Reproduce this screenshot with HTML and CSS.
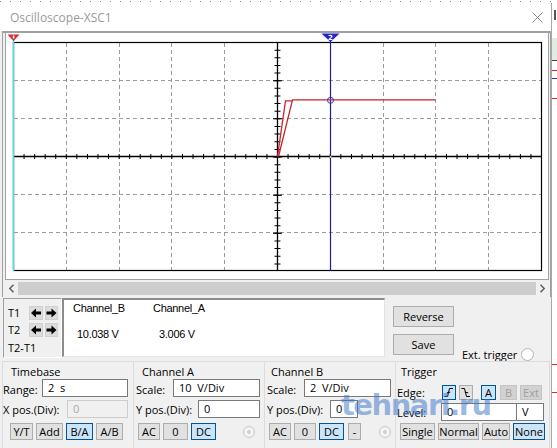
FILE: index.html
```html
<!DOCTYPE html>
<html>
<head>
<meta charset="utf-8">
<link rel="stylesheet" href="styles.css">
</head>
<body>
<div class="topdots"></div>
<div class="desk">
  <div class="win">
    <div class="titlebar">
      <span class="title">Oscilloscope-XSC1</span>
      <svg class="close" width="11" height="11" viewBox="0 0 11 11"><path d="M0.5 0.5 L10.5 10.5 M10.5 0.5 L0.5 10.5" stroke="#8a8a8a" stroke-width="1" fill="none"/></svg>
    </div>
    <div class="body">
      <div class="frame">
        <div class="screen">
          <svg class="plot" width="542" height="246" viewBox="6 33 542 246">
            <g stroke="#9a9a9a" stroke-width="1" stroke-dasharray="4 3" fill="none">
              <path d="M66.5 43 V270 M119.5 43 V270 M171.5 43 V270 M224.5 43 V270 M383.5 43 V270 M435.5 43 V270 M488.5 43 V270"/>
              <path d="M14 80.5 H541 M14 118.5 H541 M14 194.5 H541 M14 232.5 H541"/>
            </g>
            <rect x="13.5" y="42.5" width="528" height="228" fill="none" stroke="#000" stroke-width="1.2"/>
            <path d="M13.5 156.5 H541.5" stroke="#000" stroke-width="1.3"/>
            <path d="M277.5 42.5 V270.5" stroke="#000" stroke-width="1.3"/>
            <path d="M13 156.5 H541.5" stroke="#000" stroke-width="5" stroke-dasharray="1 9.56"/>
            <path d="M277.5 42 V271" stroke="#000" stroke-width="6" stroke-dasharray="1 6.634"/>
            <path d="M277.5 42 V271" stroke="#000" stroke-width="9" stroke-dasharray="1 37.17"/>
            <path d="M13.5 36 V271" stroke="#55dbe8" stroke-width="1.6"/>
            <polygon points="7.5,34.5 19.5,34.5 13.5,41" fill="#d42a32"/>
            <rect x="12.8" y="35.5" width="1.6" height="3" fill="#fff"/>
            <path d="M330.5 36 V271" stroke="#1e1e9a" stroke-width="1.2"/>
            <polygon points="321.5,33.5 339.5,33.5 330.5,42" fill="#2426c8"/>
            <text x="330.5" y="39.6" font-family="DejaVu Sans, sans-serif" font-size="7" font-weight="bold" fill="#fff" text-anchor="middle">2</text>
            <g fill="none" stroke="#c3262e" stroke-width="1.3">
              <polyline points="277.5,156.5 285.5,100.8 292,100.8"/>
              <polyline points="278.5,156.5 292.5,99.8 435.5,99.8"/>
            </g>
            <circle cx="330.5" cy="100.3" r="3" fill="none" stroke="#3434b0" stroke-width="1"/>
            <rect x="329.8" y="156" width="1.6" height="2" fill="#e8d84a"/>
          </svg>
        </div>
        <div class="hscroll">
          <div class="sarr"><svg width="7" height="9" viewBox="0 0 7 9"><path d="M5.5 0.8 L1.8 4.5 L5.5 8.2" stroke="#606060" stroke-width="1.5" fill="none"/></svg></div>
          <div class="strack"></div>
          <div class="sarr"><svg width="7" height="9" viewBox="0 0 7 9"><path d="M1.5 0.8 L5.2 4.5 L1.5 8.2" stroke="#606060" stroke-width="1.5" fill="none"/></svg></div>
        </div>
      </div>

      <div class="row1">
        <div class="tbox">
          <div class="trow">
            <span class="tlabel">T1</span>
            <span class="abtn"><svg width="14" height="14" viewBox="0 0 14 14"><polygon points="2,7 7,2.5 7,5.5 12,5.5 12,8.5 7,8.5 7,11.5" fill="#000"/></svg></span>
            <span class="abtn abtn2"><svg width="13" height="14" viewBox="0 0 13 14"><polygon points="11.5,7 6.5,2.5 6.5,5.5 1.5,5.5 1.5,8.5 6.5,8.5 6.5,11.5" fill="#000"/></svg></span>
          </div>
          <div class="trow trow2">
            <span class="tlabel">T2</span>
            <span class="abtn"><svg width="14" height="14" viewBox="0 0 14 14"><polygon points="2,7 7,2.5 7,5.5 12,5.5 12,8.5 7,8.5 7,11.5" fill="#000"/></svg></span>
            <span class="abtn abtn2"><svg width="13" height="14" viewBox="0 0 13 14"><polygon points="11.5,7 6.5,2.5 6.5,5.5 1.5,5.5 1.5,8.5 6.5,8.5 6.5,11.5" fill="#000"/></svg></span>
          </div>
          <div class="tdiff">T2-T1</div>
        </div>
        <div class="readout">
          <div class="rhead">
            <span class="rcol1">Channel_B</span>
            <span class="rcol2">Channel_A</span>
          </div>
          <div class="rvals">
            <span class="rcol1 v1">10.038 V</span>
            <span class="rcol2 v2">3.006 V</span>
          </div>
        </div>
        <div class="bcol">
          <div class="btn big">Reverse</div>
          <div class="btn big save">Save</div>
        </div>
        <div class="ext">
          <span>Ext. trigger</span>
          <span class="radio-ext"></span>
        </div>
      </div>

      <div class="groups">
        <div class="grp g-tb">
          <div class="gtitle">Timebase</div>
          <div class="grow">
            <span class="lbl lbl-first w39">Range:</span>
            <span class="inp w86">2  s</span>
          </div>
          <div class="grow grow2">
            <span class="lbl w64">X pos.(Div):</span>
            <span class="inp dis-inp w61">0</span>
          </div>
          <div class="gbtns">
            <span class="sb w23">Y/T</span>
            <span class="sb w27">Add</span>
            <span class="sb w27 on">B/A</span>
            <span class="sb w27">A/B</span>
          </div>
        </div>
        <div class="grp g-a">
          <div class="gtitle">Channel A</div>
          <div class="grow">
            <span class="lbl lbl-first w37">Scale:</span>
            <span class="inp w87">10  V/Div</span>
          </div>
          <div class="grow grow2">
            <span class="lbl w62">Y pos.(Div):</span>
            <span class="inp w62">0</span>
          </div>
          <div class="gbtns">
            <span class="sb w22">AC</span>
            <span class="sb w25">0</span>
            <span class="sb w25 on">DC</span>
            <span class="radio-dis ra"></span>
          </div>
        </div>
        <div class="grp g-b">
          <div class="gtitle">Channel B</div>
          <div class="grow">
            <span class="lbl lbl-first w37">Scale:</span>
            <span class="inp w87">2  V/Div</span>
          </div>
          <div class="grow grow2">
            <span class="lbl w63">Y pos.(Div):</span>
            <span class="inp w28">0</span>
          </div>
          <div class="gbtns">
            <span class="sb w22">AC</span>
            <span class="sb w22">0</span>
            <span class="sb w25 on">DC</span>
            <span class="sb w13 dash">-</span>
            <span class="radio-dis rb"></span>
          </div>
        </div>
        <div class="grp g-t">
          <div class="gtitle">Trigger</div>
          <div class="erow">
            <span class="lbl w45">Edge:</span>
            <span class="sb w14 on eb"><svg width="12" height="13" viewBox="0 0 12 13"><path d="M1.5 10.5 H4.5 L6.5 2.5 H10 M3.8 6.8 L7.2 6.2" stroke="#000" stroke-width="1" fill="none"/></svg></span>
            <span class="sb w14 eb"><svg width="12" height="13" viewBox="0 0 12 13"><path d="M1.5 2.5 H4.5 L6.5 10.5 H10 M4.8 6.2 L8.2 6.8" stroke="#000" stroke-width="1" fill="none"/></svg></span>
            <span class="sb w15 on ga">A</span>
            <span class="sb w17 dis">B</span>
            <span class="sb w22 dis">Ext</span>
          </div>
          <div class="lrow">
            <span class="lbl w44">Level:</span>
            <span class="inp w76">0</span>
            <span class="inp vbox w27">V</span>
          </div>
          <div class="gbtns tbtns">
            <span class="sb w35">Single</span>
            <span class="sb w41">Normal</span>
            <span class="sb w28">Auto</span>
            <span class="sb w32 on">None</span>
          </div>
        </div>
      </div>
    </div>
  </div>
  <div class="side">
    <div class="s-glyph"></div>
    <div class="s-box"></div>
    <div class="s-dark"></div>
    <div class="s-red1"></div>
    <div class="s-blue"></div>
    <div class="s-red2"></div>
    <div class="s-red3"></div>
    <div class="s-red4"></div>
  </div>
</div>
<div class="watermark">tehnari.ru</div>
</body>
</html>
```

FILE: styles.css
```css
* { box-sizing: border-box; }
html, body { margin: 0; padding: 0; }
body {
  width: 557px;
  height: 448px;
  overflow: hidden;
  background: #fff;
  font-family: "Open Sans", "Noto Sans", sans-serif;
  font-size: 11px;
  color: #000;
  position: relative;
}
.topdots {
  height: 3px;
  background-image: repeating-linear-gradient(90deg, #8a8a8a 0 1px, transparent 1px 10px);
  background-size: 100% 1px;
  background-position: 0 1px;
  background-repeat: no-repeat;
}
.desk { display: flex; height: 445px; overflow: hidden; }
.win {
  width: 552px;
  flex: none;
  background: #f0f0f0;
  border-right: 1px solid #a8a8a8;
  display: flex;
  flex-direction: column;
}
.win > *, .body > * { flex: none; }
.titlebar {
  height: 28px;
  background: #fff;
  display: flex;
  align-items: center;
  justify-content: space-between;
  padding: 1px 8px 0 10px;
}
.title { color: #9a9a9a; font-size: 12px; line-height: 15px; }
.close { display: block; margin-top: 0; }
.body { padding-left: 2px; display: flex; flex-direction: column; }

.frame {
  width: 549px;
  border-top: 2px solid #a0a0a0;
  border-left: 1px solid #a0a0a0;
  border-right: 1px solid #a0a0a0;
  padding: 0 1px 2px 2px;
}
.screen {
  width: 544px;
  height: 247px;
  background: #fff;
  border-left: 1px solid #a0a0a0;
  border-right: 1px solid #a0a0a0;
  border-bottom: 1px solid #a0a0a0;
}
.plot { display: block; }
.hscroll { margin-top: 2px; width: 544px; height: 13px; display: flex; }
.sarr {
  width: 13px;
  background: #f0f0f0;
  display: flex;
  align-items: center;
  justify-content: center;
}
.sarr svg { display: block; }
.strack { flex: 1; background: #cdcdcd; }

.row1 { display: flex; align-items: flex-start; height: 60px; margin-top: 1px; }
.tbox {
  margin-left: 1px;
  width: 59px;
  height: 60px;
  border-top: 1px solid #a0a0a0;
  border-left: 1px solid #a0a0a0;
  border-right: 1px solid #fff;
  border-bottom: 1px solid #fff;
  padding: 7px 0 0 4px;
}
.trow { display: flex; align-items: center; height: 14px; }
.trow2 { margin-top: 3px; }
.tlabel { width: 21px; line-height: 14px; }
.abtn { width: 14px; height: 14px; background: #dcdcdc; border: 1px solid #d0d0d0; display: flex; align-items: center; justify-content: center; }
.abtn svg { display: block; flex: none; }
.abtn2 { width: 13px; margin-left: 2px; }
.tdiff { margin-top: 4px; line-height: 14px; }

.readout {
  width: 323px;
  height: 59px;
  background: #fff;
  border-top: 2px solid #8c8c8c;
  border-left: 2px solid #8c8c8c;
  border-right: 1px solid #e3e3e3;
  border-bottom: 1px solid #e3e3e3;
  padding: 2px 0 0 9px;
  font-family: "Liberation Sans", Arial, sans-serif;
  font-size: 11px;
  line-height: 13px;
  letter-spacing: -0.3px;
}
.rhead, .rvals { display: flex; }
.rvals { margin-top: 13px; }
.rcol1 { width: 80px; }
.v1 { padding-left: 4px; }
.v2 { padding-left: 6px; }

.bcol { margin-left: 8px; margin-top: 8px; display: flex; flex-direction: column; }
.btn {
  background: #e1e1e1;
  border: 1px solid #adadad;
  display: flex;
  align-items: center;
  justify-content: center;
}
.big { width: 61px; height: 21px; }
.save { margin-top: 7px; }
.ext {
  margin-left: 8px;
  margin-top: 48px;
  height: 16px;
  display: flex;
  align-items: center;
}
.radio-ext {
  width: 13px;
  height: 13px;
  border-radius: 50%;
  border: 1px solid #b4b4b4;
  background: #fff;
  margin-left: 4px;
}

.groups { display: flex; margin-top: 3px; height: 90px; }
.grp { border-top: 1px solid #dcdcdc; border-left: 1px solid #dcdcdc; width: 131px; flex: none; }
.g-tb { padding: 0 5px 0 0; }
.g-a { padding: 0 4px 0 2px; }
.g-b { padding: 0 4px 0 2px; }
.g-t { width: 155px; border-right: 1px solid #dcdcdc; padding: 0 4px 0 1px; }
.gtitle { margin-top: 3px; line-height: 14px; height: 14px; }
.g-tb .gtitle { margin-left: 8px; }
.g-a .gtitle { margin-left: 6px; }
.g-b .gtitle { margin-left: 4px; }
.g-t .gtitle { margin-left: 4px; }

.grow { display: flex; align-items: center; height: 18px; }
.grow2 { margin-top: 3px; }
.lbl { line-height: 15px; flex: none; white-space: nowrap; }
.lbl-first { padding-top: 3px; }
.inp {
  height: 18px;
  border: 1px solid #7a7a7a;
  background: #fff;
  padding-left: 5px;
  line-height: 16px;
  white-space: pre;
  flex: none;
}
.dis-inp { background: #f0f0f0; border-color: #cccccc; color: #a8a8a8; }
.vbox { border-left: none; }

.gbtns { display: flex; align-items: center; gap: 3px; margin-top: 5px; height: 17px; }
.g-tb .gbtns { margin-left: 7px; }
.g-a .gbtns, .g-b .gbtns { margin-left: 2px; }
.sb {
  height: 17px;
  background: #e1e1e1;
  border: 1px solid #adadad;
  display: flex;
  align-items: center;
  justify-content: center;
  line-height: 15px;
  flex: none;
}
.sb svg { display: block; }
.on { background: #cce4f7; border-color: #005499; }
.dis { background: #d2d2d2; border-color: #c4c4c4; color: #a0a0a0; }
.dash { margin-left: 1px; }
.radio-dis {
  width: 12px;
  height: 12px;
  border-radius: 50%;
  border: 1px solid #c6c6c6;
  background: #f4f4f4;
  display: flex;
  align-items: center;
  justify-content: center;
  flex: none;
}
.radio-dis::after {
  content: "";
  width: 4px;
  height: 4px;
  border-radius: 50%;
  background: #cfcfcf;
}
.ra { margin-left: 24px; }
.rb { margin-left: 15px; }

.erow { display: flex; align-items: center; height: 15px; margin-top: 6px; }
.eb { height: 15px; }
.eb + .eb { margin-left: 3px; }
.erow .ga { margin-left: 8px; height: 15px; }
.erow .dis { height: 15px; }
.erow .w17 { margin-left: 4px; }
.erow .w22 { margin-left: 3px; }
.lrow { display: flex; align-items: center; height: 18px; margin-top: 3px; }
.tbtns { margin-top: 2px; margin-left: 3px; }

.w13 { width: 13px; } .w14 { width: 14px; } .w15 { width: 15px; } .w17 { width: 17px; }
.w22 { width: 22px; } .w23 { width: 23px; } .w25 { width: 25px; } .w27 { width: 27px; }
.w28 { width: 28px; } .w32 { width: 32px; } .w35 { width: 35px; } .w37 { width: 37px; }
.w39 { width: 39px; } .w41 { width: 41px; } .w44 { width: 44px; } .w45 { width: 45px; }
.w61 { width: 61px; } .w62 { width: 62px; } .w63 { width: 63px; } .w64 { width: 64px; }
.w76 { width: 76px; } .w86 { width: 86px; } .w87 { width: 87px; }

.side { width: 5px; flex: none; display: flex; flex-direction: column; background: #fff; }
.side > * { flex: none; }
.s-glyph { margin-top: 7px; height: 10px; width: 2px; margin-left: 2px; background: #555; }
.s-box { margin-top: 18px; height: 22px; background: #e2ebe2; }
.s-dark { height: 1px; background: #444; }
.s-red1 { margin-top: 9px; height: 1px; background: #d03030; }
.s-blue { margin-top: 7px; height: 1px; background: #3030c0; }
.s-red2 { margin-top: 19px; height: 1px; background: #d03030; }
.s-red3 { margin-top: 265px; height: 1px; background: #d03030; }
.s-red4 { margin-top: 27px; height: 1px; background: #d03030; }

.watermark {
  position: absolute;
  left: 341px;
  top: 388px;
  font-family: "DejaVu Sans", sans-serif;
  font-weight: bold;
  font-size: 29px;
  line-height: 34px;
  letter-spacing: -1.5px;
  color: rgba(55, 115, 200, 0.5);
  pointer-events: none;
}
```
